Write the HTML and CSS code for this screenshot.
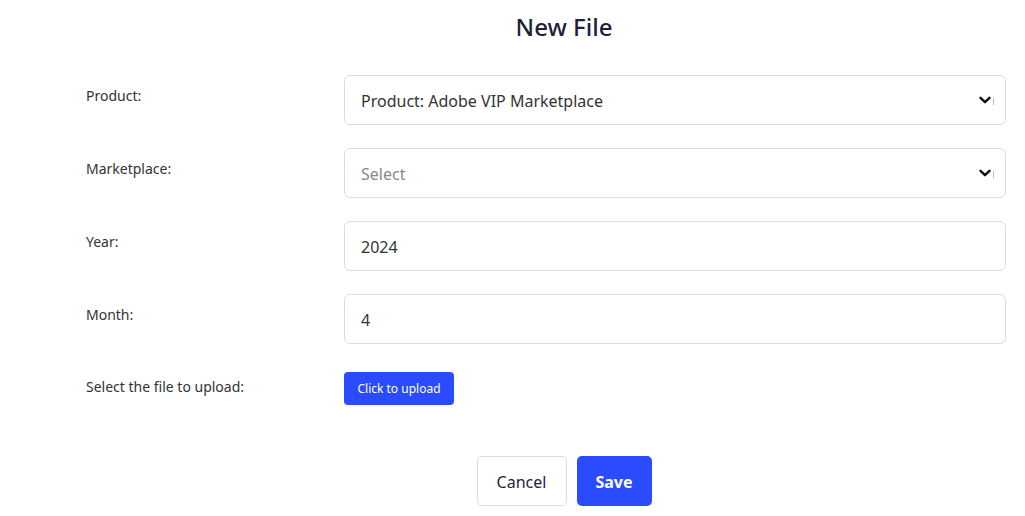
FILE: index.html
```html
<!DOCTYPE html>
<html lang="en">
<head>
  <meta charset="UTF-8" />
  <meta name="viewport" content="width=device-width, initial-scale=1.0"/>
  <title>New File</title>

  <link rel="stylesheet" href="styles.css">
</head>
<body>
  <div class="container">
    <h2 class="title">New File</h2>

    <div class="form">
      <div class="form-row">
        <label for="product">Product:</label>
        <div class="select-wrap">
          <select id="product" name="product">
            <option>Product: Adobe VIP Marketplace</option>
          </select>
          <svg class="chevron" width="12" height="8" viewBox="0 0 12 8" fill="none" stroke="#111" stroke-width="2.4" stroke-linecap="round" stroke-linejoin="round">
            <path d="M1.5 1.8l4.5 4.4 4.5-4.4" />
          </svg>
          <span class="tick"></span>
        </div>
      </div>

      <div class="form-row">
        <label for="marketplace">Marketplace:</label>
        <div class="select-wrap">
          <select id="marketplace" name="marketplace" class="placeholder">
            <option>Select</option>
          </select>
          <svg class="chevron" width="12" height="8" viewBox="0 0 12 8" fill="none" stroke="#111" stroke-width="2.4" stroke-linecap="round" stroke-linejoin="round">
            <path d="M1.5 1.8l4.5 4.4 4.5-4.4" />
          </svg>
          <span class="tick"></span>
        </div>
      </div>

      <div class="form-row">
        <label for="year">Year:</label>
        <input type="text" id="year" name="year" value="2024">
      </div>

      <div class="form-row">
        <label for="month">Month:</label>
        <input type="text" id="month" name="month" value="4">
      </div>

      <div class="form-row upload-row">
        <label>Select the file to upload:</label>
        <div>
          <button class="upload-btn">Click to upload</button>
        </div>
      </div>
    </div>

    <div class="actions">
      <button class="btn btn-cancel">Cancel</button>
      <button class="btn btn-save">Save</button>
    </div>
  </div>
</body>
</html>
```

FILE: styles.css
```css
* {
  margin: 0;
  padding: 0;
  box-sizing: border-box;
  font-family: "Noto Sans", "Open Sans", sans-serif;
}

body {
  background: white;
}

.container {
  width: 956px;
  margin-left: 86px;
}

.title {
  color: #1f1f3a;
  font-size: 24px;
  font-weight: 500;
  text-align: center;
  line-height: 32px;
  padding-top: 11px;
  margin-bottom: 32px;
}

.form {
  display: flex;
  flex-direction: column;
  gap: 23px;
}

.form-row {
  display: grid;
  grid-template-columns: 258px 662px;
  align-items: start;
}

label {
  color: #333;
  font-size: 14px;
  line-height: 20px;
  padding-top: 11px;
}

input,
select {
  width: 100%;
  height: 50px;
  padding: 2px 16px 0;
  border: 1px solid #dcdcdc;
  border-radius: 6px;
  font-size: 16px;
  color: #333;
  background: white;
  outline: none;
}

select {
  appearance: none;
  -webkit-appearance: none;
}

select.placeholder {
  color: #888;
}

.select-wrap {
  position: relative;
}

.chevron {
  position: absolute;
  right: 15px;
  top: 21px;
}

.tick {
  position: absolute;
  right: 12px;
  top: 23px;
  width: 1px;
  height: 7px;
  background: #bbb;
}

.upload-row {
  margin-top: 5px;
}

.upload-row label {
  padding-top: 5px;
}

.upload-btn {
  height: 33px;
  width: 110px;
  border: none;
  border-radius: 4px;
  background: #2a4bff;
  color: white;
  font-size: 12px;
  cursor: pointer;
}

.actions {
  display: flex;
  justify-content: center;
  gap: 10px;
  margin-top: 51px;
}

.btn {
  height: 50px;
  border-radius: 5px;
  font-size: 16px;
  padding-top: 2px;
  cursor: pointer;
}

.btn-cancel {
  width: 90px;
  background: white;
  border: 1px solid #dcdcdc;
  color: #1f1f3a;
}

.btn-save {
  width: 75px;
  background: #2a4bff;
  border: none;
  color: white;
  font-weight: 700;
}
```
